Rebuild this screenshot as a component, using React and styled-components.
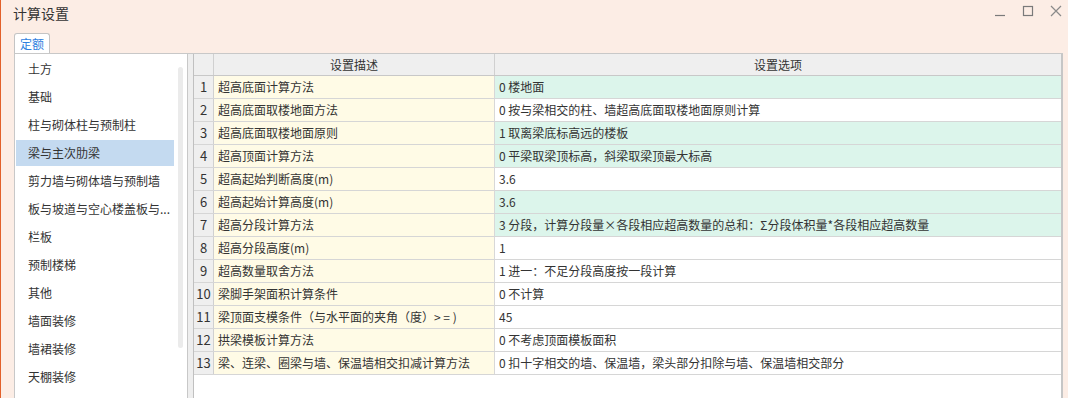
import styled, { createGlobalStyle } from "styled-components";

const GlobalStyle = createGlobalStyle`
  html, body {
    margin: 0;
    padding: 0;
    overflow: hidden;
  }
  body {
    font-family: "Noto Sans CJK SC", "Microsoft YaHei", sans-serif;
    color: #333333;
  }
`;

const categories = [
  "土方",
  "基础",
  "柱与砌体柱与预制柱",
  "梁与主次肋梁",
  "剪力墙与砌体墙与预制墙",
  "板与坡道与空心楼盖板与...",
  "栏板",
  "预制楼梯",
  "其他",
  "墙面装修",
  "墙裙装修",
  "天棚装修",
];

const rows = [
  { desc: "超高底面计算方法", value: "0 楼地面", hl: true },
  { desc: "超高底面取楼地面方法", value: "0 按与梁相交的柱、墙超高底面取楼地面原则计算" },
  { desc: "超高底面取楼地面原则", value: "1 取离梁底标高远的楼板", hl: true },
  { desc: "超高顶面计算方法", value: "0 平梁取梁顶标高，斜梁取梁顶最大标高", hl: true },
  { desc: "超高起始判断高度(m)", value: "3.6" },
  { desc: "超高起始计算高度(m)", value: "3.6", hl: true },
  { desc: "超高分段计算方法", value: "3 分段，计算分段量×各段相应超高数量的总和：Σ分段体积量*各段相应超高数量", hl: true },
  { desc: "超高分段高度(m)", value: "1" },
  { desc: "超高数量取舍方法", value: "1 进一：不足分段高度按一段计算" },
  { desc: "梁脚手架面积计算条件", value: "0 不计算" },
  { desc: "梁顶面支模条件（与水平面的夹角（度）> = )", value: "45" },
  { desc: "拱梁模板计算方法", value: "0 不考虑顶面模板面积" },
  { desc: "梁、连梁、圈梁与墙、保温墙相交扣减计算方法", value: "0 扣十字相交的墙、保温墙，梁头部分扣除与墙、保温墙相交部分" },
];

export default function App() {
  return (
    <Window>
      <GlobalStyle />
      <TitleBar>
        <Title>计算设置</Title>
        <Controls>
          <CtrlButton>
            <svg width="12" height="12" viewBox="0 0 12 12">
              <path d="M1 10.5h10" stroke="#7a7a7a" strokeWidth="1.2" fill="none" />
            </svg>
          </CtrlButton>
          <CtrlButton>
            <svg width="12" height="12" viewBox="0 0 12 12">
              <rect x="1.5" y="1.5" width="9" height="9" stroke="#7a7a7a" strokeWidth="1.2" fill="none" />
            </svg>
          </CtrlButton>
          <CtrlButton>
            <svg width="12" height="12" viewBox="0 0 12 12">
              <path d="M1 1l10 10M11 1L1 11" stroke="#8a8a8a" strokeWidth="1.2" fill="none" />
            </svg>
          </CtrlButton>
        </Controls>
      </TitleBar>
      <TabStrip>
        <Tab>定额</Tab>
      </TabStrip>
      <Panel>
        <Sidebar>
          <CategoryList>
            {categories.map((c, i) => (
              <CategoryItem key={c} $active={i === 3}>{c}</CategoryItem>
            ))}
          </CategoryList>
          <ScrollTrack>
            <ScrollThumb />
          </ScrollTrack>
        </Sidebar>
        <Splitter />
        <Grid>
          <HeaderRow>
            <HeadCell />
            <HeadCell>设置描述</HeadCell>
            <HeadCell $last>设置选项</HeadCell>
          </HeaderRow>
          {rows.map((r, i) => (
            <Row key={i}>
              <NumCell>{i + 1}</NumCell>
              <DescCell>{r.desc}</DescCell>
              <ValueCell $hl={r.hl}>{r.value}</ValueCell>
            </Row>
          ))}
        </Grid>
      </Panel>
    </Window>
  );
}

const Window = styled.div`
  height: 398px;
  display: flex;
  flex-direction: column;
  background: #fcede5;
  border-left: 1px solid #e2602a;
  box-sizing: border-box;
`;

const TitleBar = styled.div`
  height: 33px;
  display: flex;
  align-items: flex-start;
  justify-content: space-between;
  padding-left: 12px;
  box-sizing: border-box;
`;

const Title = styled.div`
  font-size: 14px;
  line-height: 26px;
  color: #333;
`;

const Controls = styled.div`
  display: flex;
  gap: 16px;
  padding: 5px 6px 0 0;
`;

const CtrlButton = styled.div`
  width: 12px;
  height: 12px;
  display: flex;
`;

const TabStrip = styled.div`
  display: flex;
  padding-left: 13px;
  height: 20px;
`;

const Tab = styled.div`
  width: 36px;
  height: 20px;
  box-sizing: border-box;
  border: 1px solid #c4c4c4;
  border-bottom: none;
  border-radius: 3px 3px 0 0;
  background: #ffffff;
  color: #2f7fe0;
  font-size: 12px;
  line-height: 19px;
  text-align: center;
`;

const Panel = styled.div`
  flex: 1;
  display: flex;
  margin: 0 5px 0 13px;
  border-top: 1px solid #c8c8c8;
  border-left: 1px solid #c8c8c8;
  min-height: 0;
  overflow: hidden;
`;

const Sidebar = styled.div`
  width: 172px;
  background: #ffffff;
  border-right: 1px solid #c8c8c8;
  display: flex;
  position: relative;
`;

const CategoryList = styled.div`
  display: flex;
  flex-direction: column;
  gap: 2px;
  padding: 2px 0 0 1px;
`;

const CategoryItem = styled.div`
  width: 158px;
  height: 26px;
  box-sizing: border-box;
  padding-left: 12px;
  font-size: 12px;
  line-height: 26px;
  white-space: nowrap;
  overflow: hidden;
  color: #333;
  background: ${(p) => (p.$active ? "#c4daf0" : "transparent")};
`;

const ScrollTrack = styled.div`
  position: absolute;
  right: 4px;
  top: 13px;
  width: 5px;
  height: 281px;
`;

const ScrollThumb = styled.div`
  width: 100%;
  height: 100%;
  border-radius: 3px;
  background: #ebebeb;
`;

const Splitter = styled.div`
  width: 5px;
  background: #eeeeee;
`;

const Grid = styled.div`
  flex: 1;
  background: #ffffff;
  border-left: 1px solid #c0c0c0;
  border-right: 2px solid #c6c6c6;
  display: flex;
  flex-direction: column;
`;

const rowColumns = `
  display: grid;
  grid-template-columns: 20px 281px 1fr;
  box-sizing: border-box;
`;

const HeaderRow = styled.div`
  ${rowColumns}
  height: 22px;
  background: #efefef;
  border-bottom: 1px solid #c8c8c8;
`;

const HeadCell = styled.div`
  border-right: ${(p) => (p.$last ? "none" : "1px solid #d0d0d0")};
  font-size: 12px;
  line-height: 21px;
  text-align: center;
  color: #333;
`;

const Row = styled.div`
  ${rowColumns}
  height: 23px;
  border-bottom: 1px solid #d6d6d6;
`;

const NumCell = styled.div`
  background: #efefef;
  border-right: 1px solid #d0d0d0;
  font-size: 13px;
  line-height: 22px;
  text-align: center;
  color: #333;
`;

const DescCell = styled.div`
  background: #fffbe6;
  border-right: 1px solid #d8d8d8;
  padding-left: 4px;
  font-size: 12px;
  line-height: 22px;
  white-space: nowrap;
  overflow: hidden;
  color: #333;
`;

const ValueCell = styled.div`
  background: ${(p) => (p.$hl ? "#dcf5eb" : "#ffffff")};
  padding-left: 4px;
  font-size: 12px;
  line-height: 22px;
  white-space: nowrap;
  overflow: hidden;
  color: #333;
`;
